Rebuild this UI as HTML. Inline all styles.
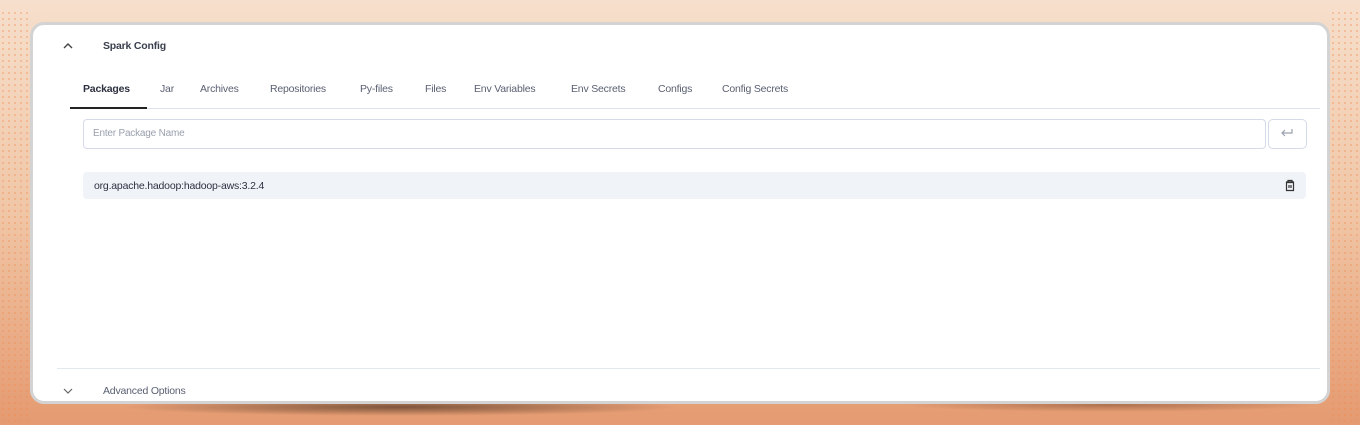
<!DOCTYPE html>
<html><head><style>
body{margin:0;width:1360px;height:425px;overflow:hidden;font-family:"Liberation Sans",sans-serif;
background:linear-gradient(180deg,#f6dfcc 0%,#f0c6a6 50%,#e59a70 100%);position:relative}
.dots{position:absolute;top:10px;bottom:0;width:30px;background-image:radial-gradient(#f08a50 0.7px,transparent 1px);background-size:6px 6px;opacity:.6}
.shadow{position:absolute;left:120px;top:398px;width:560px;height:18px;background:radial-gradient(ellipse at center,rgba(90,60,40,.75),transparent 70%)}
.shadow2{position:absolute;left:900px;top:398px;width:420px;height:14px;background:radial-gradient(ellipse at center,rgba(120,70,40,.5),transparent 70%)}
.card{position:absolute;left:30px;top:22px;width:1294px;height:376px;background:#fff;border:3px solid #d3d3d3;border-radius:14px}
.t{position:absolute;font-size:10.5px;color:#4a5568;letter-spacing:-0.2px}
.tab{position:absolute;top:83px;font-size:10.5px;color:#5a6072;letter-spacing:-0.2px}
</style></head><body>
<div class="dots" style="left:0"></div><div class="dots" style="left:1330px"></div>
<div class="shadow"></div><div class="shadow2"></div>
<div class="card"></div>
<svg style="position:absolute;left:63px;top:42px" width="10" height="8"><path d="M1 6L5 2L9 6" stroke="#444" stroke-width="1.4" fill="none"/></svg>
<div class="t" style="left:103px;top:40px;font-weight:bold;color:#3a3f4e">Spark Config</div>
<div class="tab" style="left:83px;color:#2d3140;font-weight:bold">Packages</div>
<div class="tab" style="left:160px">Jar</div>
<div class="tab" style="left:200px">Archives</div>
<div class="tab" style="left:270px">Repositories</div>
<div class="tab" style="left:360px">Py-files</div>
<div class="tab" style="left:425px">Files</div>
<div class="tab" style="left:474px">Env Variables</div>
<div class="tab" style="left:571px">Env Secrets</div>
<div class="tab" style="left:658px">Configs</div>
<div class="tab" style="left:722px">Config Secrets</div>
<div style="position:absolute;left:70px;top:108px;width:1250px;height:1px;background:#dde3ee"></div>
<div style="position:absolute;left:70px;top:107px;width:77px;height:2px;background:#222"></div>
<div style="position:absolute;left:83px;top:119px;width:1181px;height:28px;border:1px solid #d4dbe8;border-radius:4px"></div>
<div class="t" style="left:93px;top:128px;color:#9aa0ad;font-size:10px">Enter Package Name</div>
<div style="position:absolute;left:1268px;top:119px;width:37px;height:28px;border:1px solid #d4dbe8;border-radius:5px"></div>
<svg style="position:absolute;left:1280px;top:128px" width="14" height="10"><path d="M12 1V5H2M5 2L2 5L5 8" stroke="#9aa0ad" stroke-width="1.2" fill="none"/></svg>
<div style="position:absolute;left:83px;top:172px;width:1223px;height:27px;background:#f0f3f8;border-radius:4px"></div>
<div class="t" style="left:94px;top:180px;color:#2d3140;font-size:10.5px">org.apache.hadoop:hadoop-aws:3.2.4</div>
<svg style="position:absolute;left:1284px;top:179px" width="12" height="13"><path d="M2 3H10M4 3V1.5H8V3M2.5 3.5V11.5H9.5V3.5Z M5 6V9M7 6V9" stroke="#333" stroke-width="1.2" fill="none"/></svg>
<div style="position:absolute;left:57px;top:368px;width:1263px;height:1px;background:#e3e7ef"></div>
<svg style="position:absolute;left:63px;top:387px" width="10" height="8"><path d="M1 2L5 6L9 2" stroke="#666" stroke-width="1.2" fill="none"/></svg>
<div class="t" style="left:103px;top:385px;color:#5a6072">Advanced Options</div>
</body></html>
